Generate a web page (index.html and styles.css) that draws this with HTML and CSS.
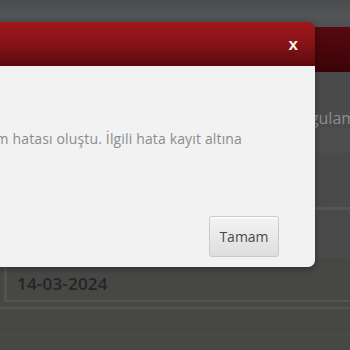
FILE: index.html
```html
<!DOCTYPE html>
<html lang="tr">
<head>
<meta charset="utf-8">
<link rel="stylesheet" href="styles.css">
</head>
<body>
<div class="page">
  <div class="topbar"></div>
  <div class="brandbar"></div>
  <div class="content">
    <div class="label-row"><span class="label">Uygulama</span></div>
    <div class="band"></div>
    <div class="area-a"></div>
    <div class="rule"></div>
    <div class="area-b"></div>
    <div class="lower">
      <div class="date-field"><span class="date">14-03-2024</span></div>
      <div class="rule2"></div>
      <div class="rule3"></div>
    </div>
  </div>
</div>
<div class="dialog">
  <div class="dialog-header"><span class="close">x</span></div>
  <div class="dialog-body">
    <div class="message-row"><p class="message">Uygulamada beklenmeyen bir sistem hatası oluştu. İlgili hata kayıt altına</p></div>
    <div class="dialog-footer"><button class="btn">Tamam</button></div>
  </div>
</div>
</body>
</html>
```
FILE: styles.css
```css
html, body {
  margin: 0;
  padding: 0;
}
body {
  width: 350px;
  height: 350px;
  overflow: hidden;
  position: relative;
  background: #474745;
  font-family: "Open Sans", "Liberation Sans", sans-serif;
}
.page {
  display: flex;
  flex-direction: column;
  overflow: hidden;
}
.topbar {
  height: 27px;
  background: linear-gradient(#4a4c4e, #525456 60%, #4c4e50);
}
.brandbar {
  height: 45px;
  background: linear-gradient(#560910, #3c0307);
}
.content {
  background: #4b4b4b;
  display: flex;
  flex-direction: column;
  padding-top: 36px;
}
.label-row {
  display: flex;
  justify-content: flex-end;
  height: 20px;
  overflow: hidden;
}
.label {
  color: #8e8e8e;
  font-size: 16px;
  line-height: 20px;
  white-space: nowrap;
  flex-shrink: 0;
  margin-right: -15px;
}
.band {
  height: 25px;
  background: #4e4e4e;
}
.area-a {
  height: 54px;
  background: #4a4a4a;
}
.rule {
  height: 3px;
  background: #555553;
}
.area-b {
  height: 48px;
  background: #4a4a4a;
}
.lower {
  background: #474745;
  padding-top: 8px;
  display: flex;
  flex-direction: column;
  height: 84px;
}
.date-field {
  display: flex;
  align-items: center;
  height: 34px;
  margin-left: 4px;
  border-left: 3px solid #525250;
  padding-left: 10px;
  border-bottom: 2px solid #535351;
}
.date {
  color: #252525;
  font-size: 17px;
  font-weight: 600;
  letter-spacing: 0.2px;
}
.rule2 {
  height: 2px;
  margin-top: 5px;
  background: #525250;
}
.rule3 {
  height: 1px;
  margin-top: 25px;
  background: #4d4d4b;
}
.dialog {
  position: absolute;
  left: -40px;
  top: 22px;
  width: 355px;
  border-radius: 0 7px 7px 0;
  overflow: hidden;
  box-shadow: 0 2px 6px rgba(0,0,0,0.35);
}
.dialog-header {
  height: 44px;
  background: linear-gradient(#a1171b, #8a1418 45%, #5a0a0c);
  display: flex;
  align-items: center;
  justify-content: flex-end;
  padding-right: 17px;
}
.close {
  color: #fff3f0;
  font-family: "Liberation Sans", Arial, sans-serif;
  font-weight: 700;
  font-size: 17px;
  line-height: 20px;
  margin-top: 2px;
}
.dialog-body {
  height: 201px;
  background: #f2f2f2;
  display: flex;
  flex-direction: column;
  box-sizing: border-box;
  padding: 63px 36px 10px 0;
}
.message-row {
  display: flex;
  justify-content: flex-end;
  padding-right: 37px;
  overflow: hidden;
}
.message {
  margin: 0;
  color: #8b8b8b;
  font-size: 14px;
  letter-spacing: 0.15px;
  line-height: 20px;
  white-space: nowrap;
  flex-shrink: 0;
}
.dialog-footer {
  margin-top: auto;
  display: flex;
  justify-content: flex-end;
}
.btn {
  width: 70px;
  height: 41px;
  border: 1px solid #cacaca;
  border-radius: 3px;
  background: linear-gradient(#f4f4f4, #dddddd);
  color: #4a4a4a;
  font-family: "Open Sans", "Liberation Sans", sans-serif;
  font-size: 14px;
  padding: 0;
  box-shadow: inset 0 1px 0 #fff;
}
```
